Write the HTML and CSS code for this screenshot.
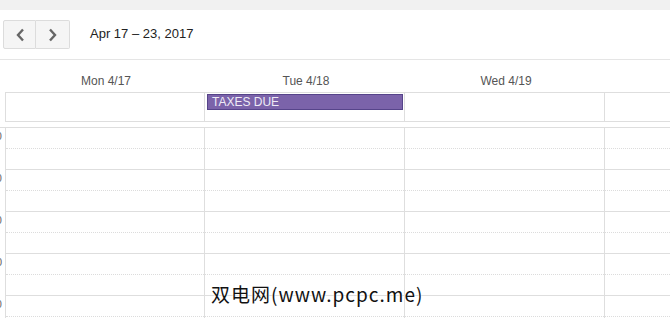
FILE: index.html
```html
<!DOCTYPE html>
<html>
<head>
    <title>Calendar Week</title>
    <link rel="stylesheet" href="styles.css">
</head>
<body>
    <div class="topbar"></div>

    <div class="toolbar">
        <div class="nav">
            <button class="nav-btn" title="Previous week">
                <svg width="10" height="14" viewBox="0 0 10 14"><path d="M8 1.5 L3 7 L8 12.5" fill="none" stroke="#666" stroke-width="2.4"/></svg>
            </button>
            <button class="nav-btn" title="Next week">
                <svg width="10" height="14" viewBox="0 0 10 14"><path d="M2 1.5 L7 7 L2 12.5" fill="none" stroke="#666" stroke-width="2.4"/></svg>
            </button>
        </div>
        <div class="range">Apr 17 – 23, 2017</div>
    </div>

    <div class="day-heads">
        <div class="day-head">Mon 4/17</div>
        <div class="day-head">Tue 4/18</div>
        <div class="day-head">Wed 4/19</div>
        <div class="day-head"></div>
    </div>

    <div class="allday">
        <div class="allday-cell"></div>
        <div class="allday-cell">
            <div class="event">TAXES DUE</div>
        </div>
        <div class="allday-cell"></div>
        <div class="allday-cell"></div>
    </div>

    <div class="grid">
        <div class="gutter">
            <div class="time">7:00</div>
            <div class="time">8:00</div>
            <div class="time">9:00</div>
            <div class="time">10:00</div>
            <div class="time">11:00</div>
        </div>
        <div class="col first"></div>
        <div class="col"></div>
        <div class="col"></div>
        <div class="col"></div>
    </div>

    <div class="watermark">双电网(www.pcpc.me)</div>

    <script>
        // fill each day column with hour slots (two halves each)
        var cols = document.querySelectorAll(".col");
        cols.forEach(function (col) {
            for (var h = 0; h < 5; h++) {
                var top = document.createElement("div");
                top.className = "half hour";
                var bottom = document.createElement("div");
                bottom.className = "half";
                col.appendChild(top);
                col.appendChild(bottom);
            }
        });
    </script>
</body>
</html>
```

FILE: styles.css
```css
html, body {
    margin: 0;
    height: 318px;
    overflow: hidden;
}

body {
    font-family: Arial, "Liberation Sans", sans-serif;
    background-color: #fff;
    color: #222;
    position: relative;
}

.topbar {
    height: 10px;
    background-color: #f1f1f1;
}

.toolbar {
    display: flex;
    align-items: flex-start;
    height: 49px;
    padding-left: 3px;
    border-bottom: 1px solid #e5e5e5;
}

.nav {
    display: flex;
    margin-top: 10px;
}

.nav-btn {
    width: 33px;
    height: 29px;
    padding: 0;
    border: 1px solid #dcdcdc;
    background-color: #f5f5f5;
    display: flex;
    align-items: center;
    justify-content: center;
    cursor: pointer;
}

.nav-btn:first-child {
    border-radius: 2px 0 0 2px;
}

.nav-btn + .nav-btn {
    border-left: none;
    width: 34px;
    border-radius: 0 2px 2px 0;
}

.range {
    margin-left: 20px;
    margin-top: 16px;
    font-size: 13px;
    line-height: 16px;
    color: #222;
}

.day-heads {
    display: flex;
    padding-left: 6px;
    height: 32px;
    white-space: nowrap;
}

.day-head {
    flex: 0 0 200px;
    text-align: center;
    font-size: 12px;
    line-height: 14px;
    padding-top: 14px;
    color: #555;
}

.allday {
    display: flex;
    margin-left: 5px;
    border: 1px solid #dedede;
    border-right: none;
    height: 28px;
}

.allday-cell {
    flex: 0 0 200px;
    box-sizing: border-box;
    border-right: 1px solid #dedede;
    padding-top: 1px;
}

.allday-cell:first-child {
    flex-basis: 199px;
}

.event {
    margin-left: 2px;
    width: 196px;
    height: 16px;
    box-sizing: border-box;
    background-color: #7b63aa;
    border: 1px solid #56448a;
    color: #eeeaf6;
    font-size: 12px;
    line-height: 14px;
    padding-left: 4px;
    white-space: nowrap;
}

.grid {
    display: flex;
    margin-top: 5px;
    border-top: 1px solid #dedede;
}

.gutter {
    flex: 0 0 5px;
    overflow: hidden;
    border-right: 1px solid #dedede;
    display: flex;
    flex-direction: column;
    align-items: flex-end;
}

.time {
    height: 42px;
    font-size: 11px;
    line-height: 13px;
    padding-top: 2px;
    margin-right: 3px;
    color: #666;
    white-space: nowrap;
    box-sizing: border-box;
}

.col {
    flex: 0 0 200px;
    box-sizing: border-box;
    border-right: 1px solid #dedede;
}

.col.first {
    flex-basis: 199px;
}

.half {
    height: 21px;
    box-sizing: border-box;
    border-top: 1px dotted #dcdcdc;
}

.half.hour {
    border-top: 1px solid #dedede;
}

.col .half:first-child {
    border-top: none;
    height: 20px;
}

/* overlay text stamped on the screenshot */
.watermark {
    position: absolute;
    left: 211px;
    top: 280px;
    font-family: "Noto Sans CJK SC", sans-serif;
    font-size: 19px;
    line-height: 28px;
    color: #111;
    letter-spacing: 1px;
    text-shadow: 0 0 2px #fff, 0 0 2px #fff;
    white-space: nowrap;
}
```
